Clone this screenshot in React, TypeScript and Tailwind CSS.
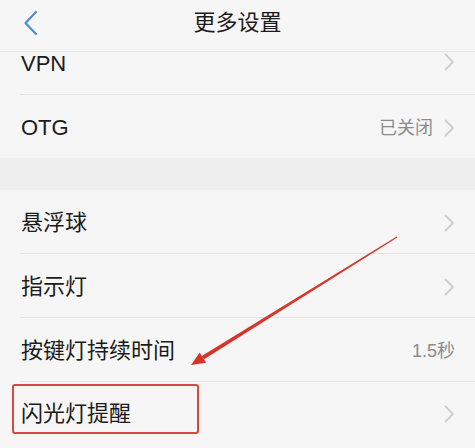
import React from "react";

const Chevron = () => (
  <svg width="11" height="18" viewBox="0 0 11 18" fill="none">
    <path d="M1.5 1.5 L9 9 L1.5 16.5" stroke="#cdcdcd" strokeWidth="1.8" strokeLinecap="round" strokeLinejoin="round" />
  </svg>
);

const Divider = () => <div className="ml-[20px] h-px bg-[#e4e4e4]" />;

function Row({ label, value, chevron = true, className = "h-[63px] items-center pt-[2px]" }: { label: string; value?: string; chevron?: boolean; className?: string }) {
  return (
    <div className={`flex pl-[21px] pr-[20px] ${className}`}>
      <span className="flex-1 text-[22px] leading-[22px] text-[#1b1b1b]">{label}</span>
      {value && (
        <span className={`text-[18px] leading-[22px] text-[#8c8c8c] ${chevron ? "mr-[11px]" : ""}`}>{value}</span>
      )}
      {chevron && <Chevron />}
    </div>
  );
}

export default function App() {
  return (
    <div
      className="relative w-[475px] h-[448px] overflow-hidden bg-[#f6f6f6]"
      style={{ fontFamily: '"Liberation Sans", "Noto Sans CJK SC", sans-serif' }}
    >
      <div className="grid grid-cols-[1fr_auto_1fr] items-center h-[52px] border-b border-[#e6e6e6]">
        <div className="pl-[23px] flex items-center -mt-[6px]">
          <svg width="16" height="26" viewBox="0 0 16 26" fill="none">
            <path d="M13 2 L2.5 13 L13 24" stroke="#4b8fd3" strokeWidth="2.2" strokeLinecap="round" strokeLinejoin="round" />
          </svg>
        </div>
        <div className="text-[22px] leading-[22px] text-[#1b1b1b] -mt-[5px]">更多设置</div>
        <div />
      </div>

      <div className="flex flex-col">
        <Row label="VPN" className="h-[42px] items-start pt-[1px]" />
        <Divider />
        <Row label="OTG" value="已关闭" />
        <div className="h-[32px] bg-[#eeeeee]" />
        <Row label="悬浮球" />
        <Divider />
        <Row label="指示灯" />
        <Divider />
        <Row label="按键灯持续时间" value="1.5秒" chevron={false} />
        <Divider />
        <Row label="闪光灯提醒" className="h-[64px] items-center" />
      </div>

      <svg className="absolute left-0 top-0 pointer-events-none" width="475" height="448" viewBox="0 0 475 448">
        <polygon points="397.3,237.4 396.7,236.6 201.7,355.9 204.1,359.3" fill="#d8342a" />
        <polygon points="191,365 206.1,362.7 199.7,352.5" fill="#d8342a" />
      </svg>
      <div className="absolute left-[12px] top-[384px] w-[187px] h-[50px] border-2 border-[#d9483e] rounded-[3px]" />
    </div>
  );
}
